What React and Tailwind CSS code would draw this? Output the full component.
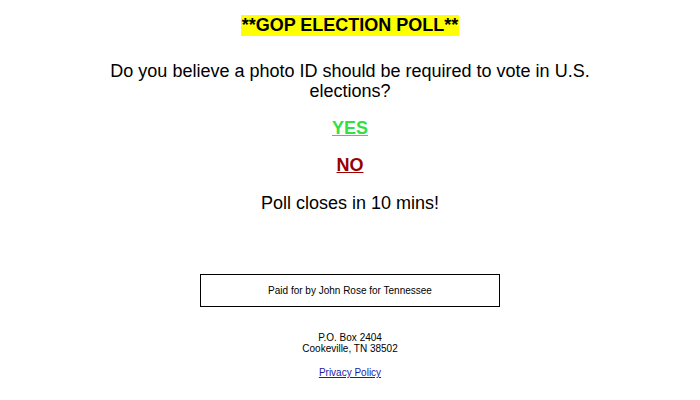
export default function App() {
  return (
    <div className="w-[700px] h-[400px] bg-white text-black text-center" style={{ fontFamily: '"Liberation Sans", Arial, sans-serif' }}>
      <div className="pt-[14px]">
        <span className="bg-[#ffff00] font-bold text-[18px] leading-[21px] inline-block px-[1px]">**GOP ELECTION POLL**</span>
      </div>
      <p className="mt-[23px] text-[18px] leading-[20px] px-[100px]">Do you believe a photo ID should be required to vote in U.S. elections?</p>
      <p className="mt-[17px] text-[18px] font-bold leading-[21px]"><a href="#" className="text-[#33e044] underline">YES</a></p>
      <p className="mt-[16px] text-[18px] font-bold leading-[21px]"><a href="#" className="text-[#990000] underline">NO</a></p>
      <p className="mt-[17px] text-[18px] leading-[20px]">Poll closes in 10 mins!</p>
      <div className="mt-[61px] mx-auto w-[300px] h-[33px] border border-black flex items-center justify-center text-[10px]">Paid for by John Rose for Tennessee</div>
      <div className="mt-[25px] text-[10px] leading-[11px]">
        <div>P.O. Box 2404</div>
        <div>Cookeville, TN 38502</div>
      </div>
      <div className="mt-[13px] text-[10px] leading-[11px]"><a href="#" className="text-[#1a1aa6] underline">Privacy Policy</a></div>
    </div>
  );
}
